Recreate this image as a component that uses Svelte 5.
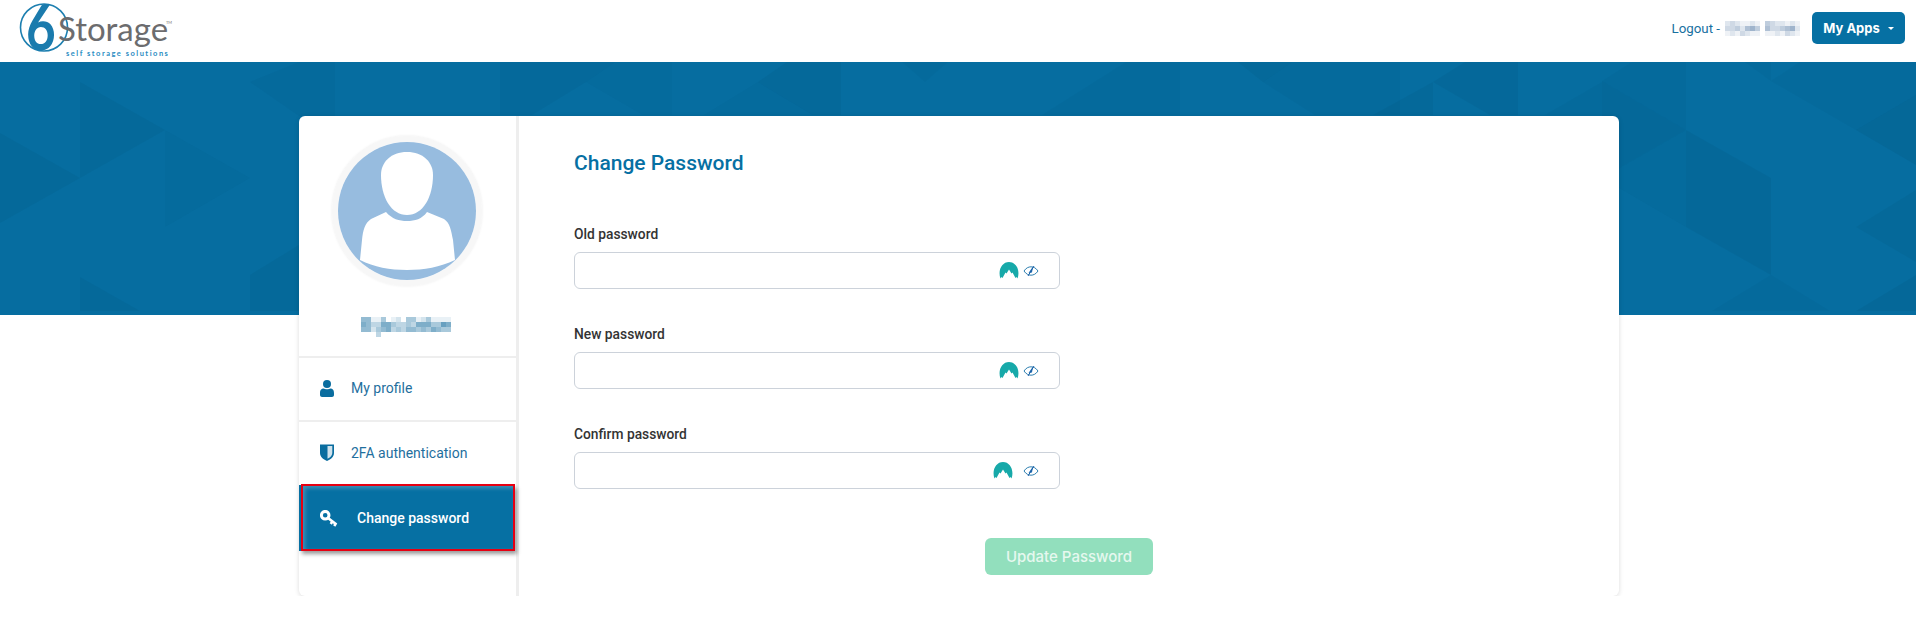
<script>
	const shards = [
		['80,82 165,130 80,178', 0.1],
		['0,133 80,178 0,223', 0.1],
		['165,130 250,178 165,227', 0.05],
		['80,277 140,311 80,311', 0.09],
		['250,275 299,245 299,311 250,311', 0.1],
		['250,82 299,62 335,62 335,116 299,116', 0.06],
		['500,62 615,62 586,82 532,115 500,115', 0.08],
		['615,62 672,62 672,115 643,115 586,82', 0.04],
		['787,62 841,62 841,115 813,115 758,82', 0.09],
		['704,115 758,82 813,115', 0.04],
		['902,62 948,62 925,82', 0.07],
		['1126,62 1180,62 1180,115 1042,115', 0.07],
		['1238,62 1292,62 1263,82', 0.1],
		['1263,82 1315,115 1400,115 1400,62 1292,62', 0.07],
		['1373,115 1433,82 1433,115', 0.09],
		['1433,82 1465,62 1518,62 1518,115 1490,115', 0.11],
		['1545,115 1602,82 1602,115', 0.07],
		['1602,81 1686,130 1602,178', 0.12],
		['1602,178 1686,130 1686,227', 0.05],
		['1602,81 1632,62 1686,62 1686,130', 0.06],
		['1686,130 1771,178 1771,275 1686,227', 0.12],
		['1712,311 1771,275 1830,311', 0.07],
		['1745,62 1771,81 1771,62', 0.07],
		['1771,81 1800,62 1916,62 1916,95 1856,130', 0.07],
		['1856,130 1916,95 1916,165', 0.13],
		['1856,227 1916,190 1916,262', 0.1],
		['1856,311 1916,275 1916,311', 0.12]
	];

	// blurred names, each digit is one mosaic cell
	const nameCells = ['551140120441241111', '653366433436664476', '552456343554546544', '000300000000000000'];
	const logoutCells = ['232112104322121', '334256405334562', '121321101121321'];

	const menu = [
		{ label: 'My profile', icon: 'user' },
		{ label: '2FA authentication', icon: 'shield' },
		{ label: 'Change password', icon: 'key', active: true }
	];

	const fields = [
		{ label: 'Old password', shift: false },
		{ label: 'New password', shift: false },
		{ label: 'Confirm password', shift: true }
	];
</script>

{#snippet mosaic(rows, tone)}
	<div class="mosaic">
		{#each rows as row}
			<div class="mosaic-row">
				{#each row.split('') as cell}
					<i style="background: rgba({tone}, {cell * 0.1})"></i>
				{/each}
			</div>
		{/each}
	</div>
{/snippet}

<header>
	<svg class="logo" width="180" height="62" viewBox="0 0 180 62">
		<circle cx="44" cy="27.500" r="23.500" fill="none" stroke="#1d7fb0" stroke-width="1.600" />
		<text class="six" transform="translate(26 50) scale(0.8 1)">6</text>
		<text class="word" x="58" y="41">Storage</text>
		<text class="tm" x="166" y="24">TM</text>
		<text class="tag" x="66" y="55.500">self storage solutions</text>
	</svg>
	<div class="account">
		<span class="logout">Logout -</span>
		{@render mosaic(logoutCells, '95, 130, 170')}
		<button class="apps">My Apps<span class="caret"></span></button>
	</div>
</header>

<section class="banner">
	<svg width="1916" height="253" viewBox="0 62 1916 253">
		{#each shards as [points, alpha]}
			<polygon {points} fill="#03405f" fill-opacity={alpha * 0.85} />
		{/each}
	</svg>
</section>

<div class="page">
	<main class="card">
		<aside>
			<div class="avatar">
				<svg width="138" height="138" viewBox="0 0 138 138">
					<circle cx="69" cy="69" r="69" fill="#97bcdf" />
					<path d="M69 10C85 10 95 20 95 33C95 55 85 73 69 73C53 73 43 55 43 33C43 20 53 10 69 10Z" fill="#fff" />
					<path d="M48 70C54 77 61 79 69 79C77 79 84 77 89 70L106 77C112 81 113 88 115 98L117 118C102 125 86 128 69 128C52 128 36 125 22 118L24 98C25 88 27 81 33 77Z" fill="#fff" />
				</svg>
			</div>
			<div class="who">
				{@render mosaic(nameCells, '40, 120, 165')}
			</div>
			<nav>
				{#each menu as item}
					<div class="item" class:active={item.active}>
						{#if item.icon === 'user'}
							<svg width="14" height="17" viewBox="0 0 14 17" fill="#0a6d9f">
								<circle cx="7" cy="4" r="4" />
								<path d="M0 13C0 9.500 2 8.500 3.500 8.500C5 9.500 9 9.500 10.500 8.500C12 8.500 14 9.500 14 13V15C14 16 13 17 12 17H2C1 17 0 16 0 15Z" />
							</svg>
						{:else if item.icon === 'shield'}
							<svg width="14" height="17" viewBox="0 0 14 17">
								<path d="M0 .500H14V9C14 12.500 11 15.500 7 17C3 15.500 0 12.500 0 9Z" fill="#0a6d9f" />
								<path d="M7.500 2H12.300V9C12.300 11.500 10 13.700 7.500 14.800Z" fill="#cfe2ec" />
							</svg>
						{:else}
							<svg width="18" height="17" viewBox="0 0 18 17" fill="none" stroke="#fff">
								<circle cx="5.200" cy="5.200" r="3.800" stroke-width="3" />
								<path d="M8 8L16.500 14.500M12.500 11.200L10.800 14M15.800 13.500L14.200 16" stroke-width="2.600" />
							</svg>
						{/if}
						<span>{item.label}</span>
					</div>
				{/each}
			</nav>
		</aside>

		<div class="panel">
			<h1>Change Password</h1>
			<form>
				{#each fields as field}
					<div class="field">
						<span class="label">{field.label}</span>
						<div class="box">
							<svg class:shift={field.shift} width="20" height="17" viewBox="0 0 20 17">
								<path d="M1.500 16.500C-1.500 8 3 0 10 0C17 0 21.500 8 18.500 16.500L17.500 15L16.500 16L13.500 10.500L12.500 11.500L10 7.500L7.500 11.500L6.500 10.500L3.500 16L2.500 15Z" fill="#17a9a9" />
							</svg>
							<svg class="eye" width="16" height="12" viewBox="0 0 16 12" fill="none">
								<path d="M1 6C3 3 5.500 1.800 8 1.800C10.500 1.800 13 3 15 6C13 9 10.500 10.200 8 10.200C5.500 10.200 3 9 1 6Z" stroke="#2e7fb0" stroke-width="1" />
								<path d="M5.500 8L10 1.500L9 7.500Z" fill="#1c6cb0" />
								<path d="M5 11L11 1" stroke="#1c5fa8" stroke-width="1" />
							</svg>
						</div>
					</div>
				{/each}
				<div class="actions">
					<button type="button" class="update">Update Password</button>
				</div>
			</form>
		</div>
	</main>
</div>

<style>
	:global(body) {
		background: #fff;
		font-family: Roboto, 'Liberation Sans', sans-serif;
		overflow: hidden;
	}

	header {
		height: 62px;
		display: flex;
		justify-content: space-between;
		align-items: center;
		padding: 0 11px 0 0;
		box-sizing: border-box;
	}

	.logo {
		display: block;
	}

	.six {
		font: 700 64px Lato, sans-serif;
		fill: #1b7bad;
	}

	.word {
		font: 400 33px Lato, sans-serif;
		fill: #6c6c6e;
	}

	.tm {
		font: 400 4px Lato, sans-serif;
		fill: #777;
	}

	.tag {
		font: 700 7.500px Lato, sans-serif;
		fill: #2a8cc2;
		letter-spacing: 1.500px;
	}

	.account {
		display: flex;
		align-items: center;
		padding-bottom: 6px;
		font-size: 13.300px;
		color: #18709f;
	}

	.logout {
		margin-right: 5px;
	}

	.mosaic {
		display: flex;
		flex-direction: column;
	}

	.mosaic-row {
		display: flex;
	}

	.mosaic i {
		display: block;
		width: 5px;
		height: 5px;
	}

	.apps {
		margin-left: 12px;
		width: 93px;
		height: 32px;
		border: 0;
		border-radius: 5px;
		background: #0670a3;
		color: #fff;
		font: 700 13px Inter, sans-serif;
		display: flex;
		align-items: center;
		justify-content: center;
		gap: 8px;
	}

	.caret {
		border-top: 3px solid #fff;
		border-left: 3px solid transparent;
		border-right: 3px solid transparent;
	}

	.banner {
		height: 253px;
		background: #066da0;
	}

	.banner svg {
		display: block;
	}

	.page {
		position: relative;
		margin-top: -199px;
		padding: 0 297px 0 299px;
	}

	.card {
		height: 480px;
		display: flex;
		background: #fff;
		border-radius: 6px;
		box-shadow: 0 1px 5px rgba(0, 0, 0, 0.14);
	}

	aside {
		width: 220px;
		box-sizing: border-box;
		flex: none;
		border-right: 3px solid #eeeeee;
		display: flex;
		flex-direction: column;
	}

	.avatar {
		width: 138px;
		height: 138px;
		margin: 20px auto 0;
		border-radius: 50%;
		border: 6px solid #f7f7f7;
		box-shadow: 0 0 3px rgba(0, 0, 0, 0.08);
		transform: translateX(-1px);
	}

	.avatar svg {
		display: block;
	}

	.who {
		margin-top: 31px;
		height: 39px;
		display: flex;
		justify-content: center;
		padding-right: 3px;
		border-bottom: 2px solid #eeeeee;
	}

	nav {
		display: flex;
		flex-direction: column;
	}

	.item {
		height: 63px;
		box-sizing: border-box;
		display: flex;
		align-items: center;
		gap: 17px;
		padding: 0 0 2px 21px;
		font-size: 14px;
		color: #1f6f9e;
		border-bottom: 2px solid #eeeeee;
	}

	.item:first-child {
		height: 64px;
	}

	.item:nth-child(2) {
		border-bottom: 0;
	}

	.item.active {
		position: relative;
		height: 66px;
		width: 215px;
		background: #0670a3;
		color: #fff;
		font-weight: 500;
		gap: 19px;
		padding-bottom: 0;
		border-bottom: 0;
		box-shadow: 3px 3px 4px rgba(0, 0, 0, 0.4);
	}

	/* red highlight around the current entry */
	.item.active::after {
		content: '';
		position: absolute;
		top: -1px;
		left: 2px;
		right: -1px;
		bottom: 0;
		border: 2px solid #e60012;
		box-shadow: inset 2px 2px 4px rgba(255, 255, 255, 0.25);
	}

	.panel {
		flex: 1;
		padding: 34px 0 0 55px;
	}

	h1 {
		margin: 0;
		font-size: 21px;
		font-weight: 500;
		line-height: 26px;
		color: #0670a3;
	}

	.field {
		margin-top: 36px;
		height: 64px;
		width: 486px;
		display: flex;
		flex-direction: column;
		gap: 9px;
	}

	.field:first-child {
		margin-top: 49px;
	}

	.label {
		font-size: 13.800px;
		font-weight: 500;
		line-height: 18px;
		color: #333;
	}

	.box {
		height: 37px;
		box-sizing: border-box;
		border: 1px solid #ccd2da;
		border-radius: 6px;
		display: flex;
		align-items: center;
		justify-content: flex-end;
		padding-right: 20px;
		gap: 4px;
	}

	.box .shift {
		margin-right: 6px;
	}

	.eye {
		flex: none;
	}

	.actions {
		width: 990px;
		margin-top: 49px;
		display: flex;
		justify-content: center;
	}

	.update {
		width: 168px;
		height: 37px;
		border: 0;
		border-radius: 6px;
		background: #92dfbd;
		color: #e6f8ef;
		font: 500 15px Inter, sans-serif;
	}
</style>
